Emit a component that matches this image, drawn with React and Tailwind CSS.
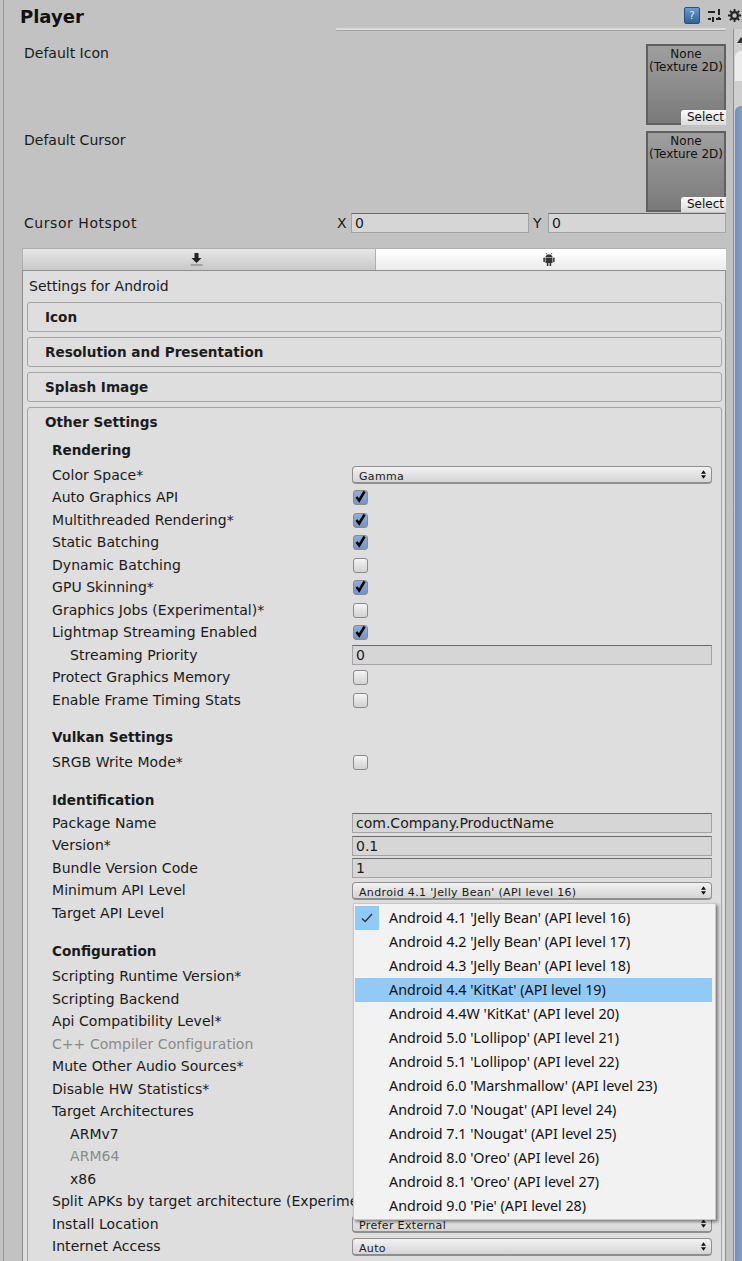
const rendering = [
  ['Auto Graphics API', true],
  ['Multithreaded Rendering*', true],
  ['Static Batching', true],
  ['Dynamic Batching', false],
  ['GPU Skinning*', true],
  ['Graphics Jobs (Experimental)*', false],
  ['Lightmap Streaming Enabled', true],
];

const leftLabels = [
  ['Scripting Runtime Version*'],
  ['Scripting Backend'],
  ['Api Compatibility Level*'],
  ['C++ Compiler Configuration', 'dim'],
  ['Mute Other Audio Sources*'],
  ['Disable HW Statistics*'],
  ['Target Architectures'],
  ['ARMv7', 'indent'],
  ['ARM64', 'indent dim'],
  ['x86', 'indent'],
  ['Split APKs by target architecture (Experimental)'],
];

const apiLevels = [
  "Android 4.1 'Jelly Bean' (API level 16)",
  "Android 4.2 'Jelly Bean' (API level 17)",
  "Android 4.3 'Jelly Bean' (API level 18)",
  "Android 4.4 'KitKat' (API level 19)",
  "Android 4.4W 'KitKat' (API level 20)",
  "Android 5.0 'Lollipop' (API level 21)",
  "Android 5.1 'Lollipop' (API level 22)",
  "Android 6.0 'Marshmallow' (API level 23)",
  "Android 7.0 'Nougat' (API level 24)",
  "Android 7.1 'Nougat' (API level 25)",
  "Android 8.0 'Oreo' (API level 26)",
  "Android 8.1 'Oreo' (API level 27)",
  "Android 9.0 'Pie' (API level 28)",
];

function Check({ on }) {
  return (
    <div className={`relative ml-[1px] w-[15px] h-[15px] rounded-[3px] border border-[#8a8a8a] ${on ? 'bg-gradient-to-b from-[#92aed6] to-[#7595c4]' : 'bg-gradient-to-b from-[#f4f4f4] to-[#d2d2d2]'}`}>
      {on && (
        <svg viewBox="0 0 15 15" className="absolute left-[-1px] top-[-2px] w-[15px] h-[15px]">
          <path d="M3.5 8 L6.2 11.5 L11.5 2.5" fill="none" stroke="#000" strokeWidth="2.5" />
        </svg>
      )}
    </div>
  );
}

function Row({ label, indent, dim, children }) {
  return (
    <div className="flex items-center h-[22.5px]">
      <div className={`w-[300px] shrink-0 whitespace-nowrap tracking-[0.05px] ${indent ? 'pl-[18px]' : ''} ${dim ? 'text-[#8a8a8a]' : ''}`}>{label}</div>
      <div className="flex-1 flex items-center">{children}</div>
    </div>
  );
}

function Select({ value }) {
  return (
    <div className="flex items-center justify-between w-[360px] h-[18px] pl-[6px] pr-[5px] rounded-[4px] border border-[#8f8f8f] border-b-2 bg-gradient-to-b from-[#f2f2f2] to-[#d4d4d4] text-[11px] tracking-[0.35px] leading-none">
      <span className="pt-[4px]">{value}</span>
      <svg viewBox="0 0 6 10" className="w-[5px] h-[9px]">
        <path d="M3 0 L6 4 H0 Z M3 10 L6 6 H0 Z" fill="#111" />
      </svg>
    </div>
  );
}

function Field({ value, className = '' }) {
  return (
    <div className={`flex items-center h-[20px] pl-[3px] border border-[#a4a4a4] border-t-[#6a6a6a] bg-[#d6d6d6] leading-none ${className}`}>{value}</div>
  );
}

function Foldout({ title }) {
  return (
    <div className="flex items-center h-[30px] pl-[17px] rounded-[3px] border border-[#a5a5a5] font-bold text-[13.6px] text-[#1c1c1c]">{title}</div>
  );
}

function Heading({ title, className = '' }) {
  return <div className={`font-bold text-[13.6px] flex items-center ${className}`}>{title}</div>;
}

function TexturePicker() {
  return (
    <div className="relative w-[80px] h-[81px] border-2 border-[#606060] bg-gradient-to-b from-[#9f9f9f] to-[#7a7a7a] text-center text-[12px] leading-[13px] pt-[2px] text-[#111]">
      <div>None</div>
      <div className="whitespace-nowrap">(Texture 2D)</div>
      <div className="absolute right-[-2px] bottom-[-2px] w-[45px] h-[15px] rounded-tl-[3px] bg-gradient-to-b from-[#fafafa] to-[#dcdcdc] pl-[6px] leading-[15px] text-left">Select</div>
    </div>
  );
}

export default function App() {
  return (
    <div className="relative w-[742px] h-[1261px] overflow-hidden bg-[#c2c2c2] text-[#1a1a1a] text-[14px] font-['DejaVu_Sans',sans-serif]">
      {/* header */}
      <div className="relative h-[44px] ml-[3px] border-l border-[#9a9a9a]">
        <div className="absolute left-[16px] top-[3px] font-bold text-[18px] text-[#111]">Player</div>
        <div className="absolute left-[332px] top-[28px] w-[390px] h-[3px] rounded-[1px] border-b border-[#a5a5a5] bg-[#dcdcdc]"></div>
        <div className="absolute left-[680px] top-[7px] w-[16px] h-[17px] rounded-[2px] bg-gradient-to-b from-[#6a9ccd] to-[#2f6298] border border-[#2c4f75] text-[#dbe8f5] text-[10px] leading-[15px] text-center">?</div>
        <svg viewBox="0 0 14 15" className="absolute left-[704px] top-[8px] w-[14px] h-[15px]">
          <path d="M0 4 H7 M0 11 H3 M8 11 H13 M5 9 V14 M11 1 V7" stroke="#222" strokeWidth="2" fill="none" />
          <path d="M11 9 V12" stroke="#222" strokeWidth="2" />
        </svg>
        <svg viewBox="0 0 16 16" className="absolute left-[724px] top-[8px] w-[15px] h-[15px]">
          <circle cx="7" cy="8" r="3.6" fill="none" stroke="#222" strokeWidth="2.4" />
          <path d="M7 1 V4 M7 12 V15 M0 8 H3 M11 8 H14 M2 3 L4 5 M10 11 L12 13 M12 3 L10 5 M4 11 L2 13" stroke="#222" strokeWidth="2" />
        </svg>
      </div>

      {/* scrollbar */}
      <div className="absolute left-[733px] top-[29px] bottom-0 w-[9px] border-l border-[#8f8f8f] bg-[#cfcfcf]">
        <div className="absolute left-[3px] top-[8px] w-0 h-0 border-x-[4px] border-x-transparent border-b-[6px] border-b-[#333]"></div>
        <div className="absolute left-[1px] top-[22px] w-[12px] h-[30px] rounded-t-[8px] bg-[#ececec]"></div>
        <div className="absolute left-[1px] top-[77px] bottom-0 w-[12px] rounded-t-[6px] bg-gradient-to-r from-[#6f8fbc] to-[#92aacb]"></div>
      </div>

      <div className="absolute left-[3px] top-0 bottom-0 w-px bg-[#9a9a9a]"></div>

      <div className="pl-[22px] pr-[16px]">
        <div className="flex justify-between h-[87px]">
          <div className="pl-[2px] -mt-[1px]">Default Icon</div>
          <TexturePicker />
        </div>
        <div className="flex justify-between h-[87px]">
          <div className="pl-[2px] -mt-[1px]">Default Cursor</div>
          <TexturePicker />
        </div>
        <div className="flex items-center h-[20px] -mt-[5px]">
          <div className="w-[315px] pl-[2px] tracking-[0.55px]">Cursor Hotspot</div>
          <span className="w-[14px]">X</span>
          <Field value="0" className="w-[178px]" />
          <span className="w-[19px] pl-[4px]">Y</span>
          <Field value="0" className="flex-1" />
        </div>

        {/* platform tabs */}
        <div className="flex h-[23px] mt-[15px] border-b border-[#8d8d8d]">
          <div className="flex items-center justify-center w-[353px] pr-[6px] pb-[2px] border-l border-t border-[#b0b0b0] bg-gradient-to-b from-[#e6e6e6] to-[#c9c9c9]">
            <svg viewBox="0 0 12 14" className="w-[13px] h-[14px]">
              <path d="M4 1 H8 V6 H11 L6 11 L1 6 H4 Z" fill="#222" />
              <path d="M0 13 H12" stroke="#777" strokeWidth="1" />
            </svg>
          </div>
          <div className="flex items-center justify-center flex-1 pr-[4px] pb-[2px] border-l border-t border-[#b0b0b0] bg-gradient-to-b from-[#ffffff] to-[#ececec]">
            <svg viewBox="0 0 12 14" className="w-[12px] h-[14px]">
              <path d="M3 1 L4 2.6 M9 1 L8 2.6" stroke="#333" strokeWidth="0.8" />
              <path d="M2.5 5 C2.5 1.5 9.5 1.5 9.5 5 Z M2.5 5.6 H9.5 V11 H8.2 V14 H6.6 V11 H5.4 V14 H3.8 V11 H2.5 Z" fill="#333" />
              <rect x="0.4" y="5.6" width="1.5" height="4.6" rx="0.7" fill="#333" />
              <rect x="10.1" y="5.6" width="1.5" height="4.6" rx="0.7" fill="#333" />
            </svg>
          </div>
        </div>

        {/* android panel */}
        <div className="h-[1000px] pl-[4px] pr-[3px] bg-[#dedede] border-x border-[#8d8d8d]">
          <div className="pl-[2px] pt-[4px] h-[31px] leading-[22px]">Settings for Android</div>
          <div className="flex flex-col gap-[5px]">
            <Foldout title="Icon" />
            <Foldout title="Resolution and Presentation" />
            <Foldout title="Splash Image" />
          </div>
          <div className="mt-[5px] rounded-[3px] border border-[#a5a5a5] h-[900px] pl-[24px] pr-[9px]">
            <Heading title="Other Settings" className="text-[#1c1c1c] -ml-[7px] h-[29px]" />
            <Heading title="Rendering" className="h-[27px]" />
            <Row label="Color Space*"><Select value="Gamma" /></Row>
            {rendering.map(([label, on]) => (
              <Row key={label} label={label}><Check on={on} /></Row>
            ))}
            <Row label="Streaming Priority" indent><Field value="0" className="w-[360px]" /></Row>
            <Row label="Protect Graphics Memory"><Check /></Row>
            <Row label="Enable Frame Timing Stats"><Check /></Row>

            <Heading title="Vulkan Settings" className="h-[22px] mt-[15px] mb-[3px]" />
            <Row label="SRGB Write Mode*"><Check /></Row>

            <Heading title="Identification" className="h-[22px] mt-[15px] mb-[1px]" />
            <Row label="Package Name"><Field value="com.Company.ProductName" className="w-[360px]" /></Row>
            <Row label="Version*"><Field value="0.1" className="w-[360px]" /></Row>
            <Row label="Bundle Version Code"><Field value="1" className="w-[360px]" /></Row>
            <Row label="Minimum API Level"><Select value="Android 4.1 'Jelly Bean' (API level 16)" /></Row>
            <Row label="Target API Level" />

            <Heading title="Configuration" className="h-[22px] mt-[16px] mb-[3px]" />
            {leftLabels.map(([label, mod = '']) => (
              <Row key={label} label={label} indent={mod.includes('indent')} dim={mod.includes('dim')} />
            ))}
            <Row label="Install Location"><Select value="Prefer External" /></Row>
            <Row label="Internet Access"><Select value="Auto" /></Row>
          </div>
        </div>
      </div>

      {/* API level dropdown */}
      <div className="absolute left-[353px] top-[903px] w-[363px] h-[317px] pl-[1px] pr-[3px] pt-[2px] bg-[#f2f2f2] border border-[#c8c8c8] shadow-[2px_2px_3px_rgba(0,0,0,0.45)] text-[14.3px] text-[#111] font-['Noto_Sans',sans-serif]">
        {apiLevels.map((level, i) => (
          <div key={level} className={`relative flex items-center h-[24px] pl-[34px] whitespace-nowrap ${i === 3 ? 'bg-[#91c9f7]' : ''}`}>
            {i === 0 && (
              <div className="absolute left-0 top-0 w-[24px] h-[24px] bg-[#91c9f7] flex items-center justify-center">
                <svg viewBox="0 0 12 12" className="w-[12px] h-[12px]">
                  <path d="M1 6.5 L4.2 9.5 L11 2" fill="none" stroke="#333" strokeWidth="1.4" />
                </svg>
              </div>
            )}
            {level}
          </div>
        ))}
      </div>
    </div>
  );
}
